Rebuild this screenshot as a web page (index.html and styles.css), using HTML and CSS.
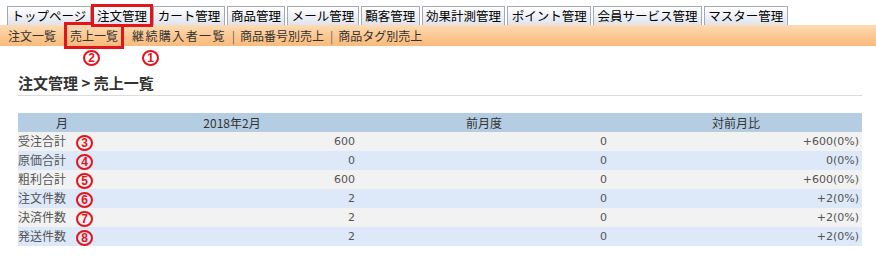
FILE: index.html
```html
<!DOCTYPE html>
<html lang="ja">
<head>
    <meta charset="UTF-8">
    <title>売上一覧</title>
    <link rel="stylesheet" href="styles.css">
</head>
<body>

    <!-- Main tabs -->
    <div class="tabs">
        <span class="tab">トップページ</span>
        <span class="tab active">注文管理</span>
        <span class="tab">カート管理</span>
        <span class="tab">商品管理</span>
        <span class="tab">メール管理</span>
        <span class="tab">顧客管理</span>
        <span class="tab">効果計測管理</span>
        <span class="tab">ポイント管理</span>
        <span class="tab">会員サービス管理</span>
        <span class="tab">マスター管理</span>
    </div>

    <!-- Sub menu -->
    <div class="submenu">
        <a class="sub">注文一覧</a>
        <a class="sub current">売上一覧</a>
        <a class="sub wide">継続購入者一覧</a>
        <span class="sep">|</span>
        <a class="sub">商品番号別売上</a>
        <span class="sep">|</span>
        <a class="sub">商品タグ別売上</a>
        <span class="circle mark mark-2">2</span>
        <span class="circle mark mark-1">1</span>
    </div>

    <div class="content">
        <h2 class="page-title">注文管理 &gt; 売上一覧</h2>

        <table class="sales">
            <thead>
                <tr>
                    <th class="col-label">月</th>
                    <th>2018年2月</th>
                    <th>前月度</th>
                    <th>対前月比</th>
                </tr>
            </thead>
            <tbody>
                <tr>
                    <td>受注合計<span class="circle num">3</span></td>
                    <td class="val">600</td>
                    <td class="val">0</td>
                    <td class="val">+600(0%)</td>
                </tr>
                <tr>
                    <td>原価合計<span class="circle num">4</span></td>
                    <td class="val">0</td>
                    <td class="val">0</td>
                    <td class="val">0(0%)</td>
                </tr>
                <tr>
                    <td>粗利合計<span class="circle num">5</span></td>
                    <td class="val">600</td>
                    <td class="val">0</td>
                    <td class="val">+600(0%)</td>
                </tr>
                <tr>
                    <td>注文件数<span class="circle num">6</span></td>
                    <td class="val">2</td>
                    <td class="val">0</td>
                    <td class="val">+2(0%)</td>
                </tr>
                <tr>
                    <td>決済件数<span class="circle num">7</span></td>
                    <td class="val">2</td>
                    <td class="val">0</td>
                    <td class="val">+2(0%)</td>
                </tr>
                <tr>
                    <td>発送件数<span class="circle num">8</span></td>
                    <td class="val">2</td>
                    <td class="val">0</td>
                    <td class="val">+2(0%)</td>
                </tr>
            </tbody>
        </table>
    </div>

</body>
</html>
```

FILE: styles.css
```css
body {
    margin: 0;
    background-color: #ffffff;
    color: #333;
    font-family: "Noto Sans CJK JP", "DejaVu Sans", sans-serif;
}

/* Main tabs */
.tabs {
    display: flex;
    gap: 2px;
    padding: 6px 0 0 7px;
    height: 19px;
}

.tab {
    position: relative;
    height: 18px;
    padding: 0 3.4px;
    font-size: 12.5px;
    line-height: 18px;
    color: #000;
    background: linear-gradient(#ffffff, #dfe3ec);
    border: 1px solid #a5a9b2;
    border-bottom: none;
}

.tab.active {
    outline: 3px solid #e2141c;
    outline-offset: -1px;
    z-index: 2;
}

/* Sub menu bar */
.submenu {
    position: relative;
    display: flex;
    align-items: center;
    height: 21px;
    padding-left: 8px;
    background: linear-gradient(#fddbb4, #fbc58e 60%, #f9bb7c);
    font-size: 12px;
}

.sub {
    color: #333;
    margin-right: 13px;
}

.sub.wide {
    letter-spacing: 1.4px;
}

.sub.current {
    outline: 3px solid #e2141c;
    outline-offset: 2px;
    padding: 0 1px;
}

.sep {
    color: #666;
    margin: 0 5px 0 -7px;
}

/* Red circled numbers */
.circle {
    display: inline-flex;
    align-items: center;
    justify-content: center;
    box-sizing: border-box;
    width: 17px;
    height: 16px;
    border: 2px solid #e2141c;
    border-radius: 50%;
    color: #e2141c;
    font-family: "Liberation Sans", Arial, sans-serif;
    font-size: 12px;
    font-weight: bold;
    line-height: 1;
}

.mark {
    position: absolute;
    top: 25px;
}

.mark-2 {
    left: 83px;
}

.mark-1 {
    left: 142px;
}

.content {
    padding: 0 14px 0 18px;
}

.page-title {
    margin: 27px 0 0;
    padding-bottom: 3px;
    font-size: 15px;
    line-height: 19px;
    font-weight: bold;
    color: #333;
    border-bottom: 1px solid #dcdcdc;
}

/* Sales table */
.sales {
    width: 100%;
    margin-top: 17px;
    border-collapse: collapse;
    font-size: 12px;
    table-layout: fixed;
}

.sales th {
    height: 19px;
    padding: 0;
    background-color: #b4cde2;
    color: #333;
    font-weight: normal;
    text-align: center;
}

.sales th.col-label {
    width: 88px;
}

.sales td {
    height: 19px;
    padding: 0 3px 0 0;
    color: #555;
    white-space: nowrap;
}

.sales tbody tr:nth-child(odd) td {
    background-color: #f2f2f2;
}

.sales tbody tr:nth-child(even) td {
    background-color: #dde8f9;
}

.sales td.val {
    text-align: right;
    font-family: "DejaVu Sans", sans-serif;
    font-size: 11px;
}

.num {
    margin-left: 10px;
    vertical-align: middle;
}
```
